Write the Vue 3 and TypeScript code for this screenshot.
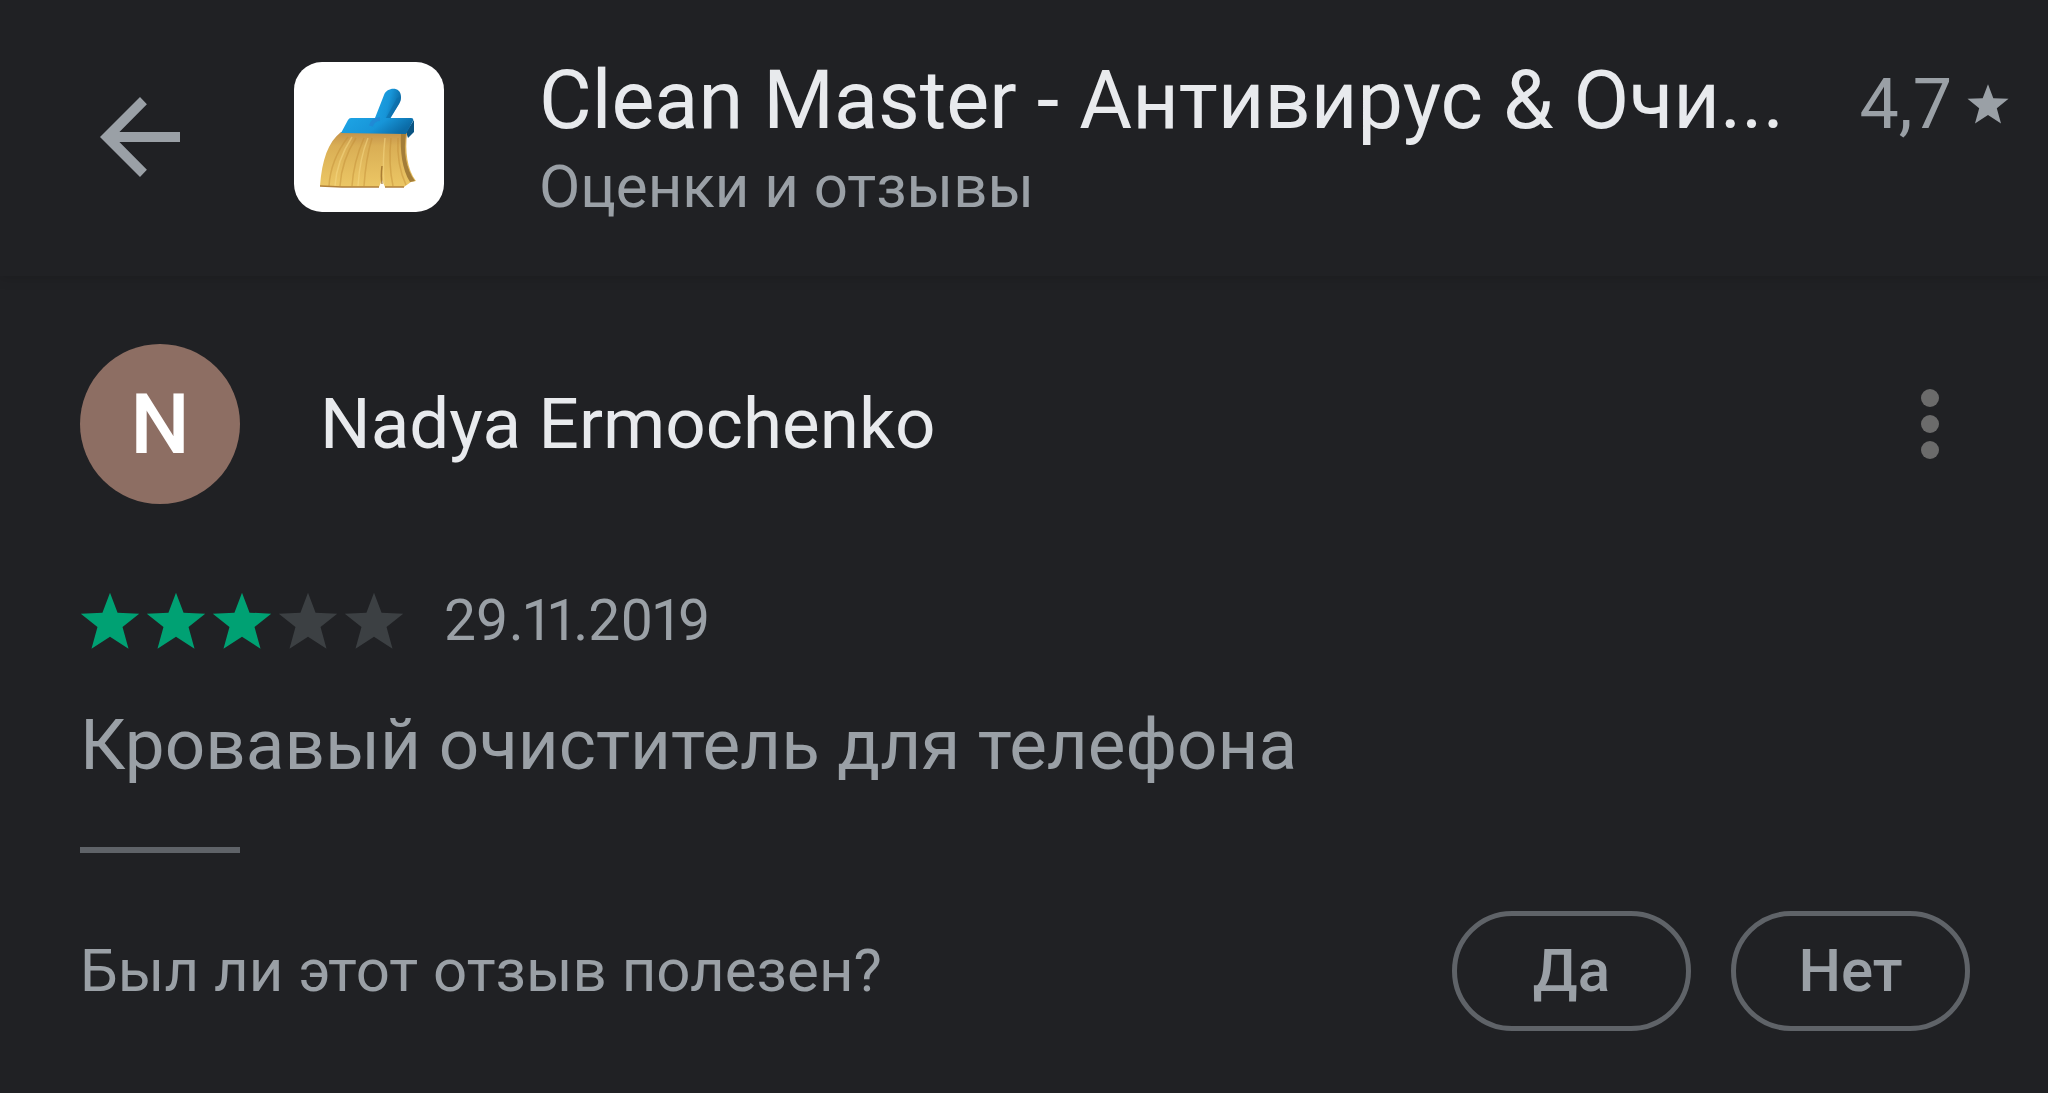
<script setup lang="ts">
import { ref } from 'vue'

interface Review {
  author: string
  rating: number
  date: string
  text: string
}

const review: Review = {
  author: 'Nadya Ermochenko',
  rating: 3,
  date: '29.11.2019',
  text: 'Кровавый очиститель для телефона',
}

const answers = ['Да', 'Нет']
const answer = ref('')
const starPath = 'M12 1.2l2.9 7.6 8.3.4-6.4 5.1 2.3 8.3-7.1-4.6-7.1 4.6 2.3-8.3L.8 9.2l8.3-.4z'
</script>

<template>
  <div class="page">
    <header class="bar">
      <button class="icon-button back" type="button" aria-label="Назад">
        <svg viewBox="0 0 80 80" aria-hidden="true">
          <path d="M80 34.9H19.400L46.900 7.300 40 0 0 40l40 40 6.900-7.200L19.400 45.100H80z" fill="#9aa0a6" />
        </svg>
      </button>
      <svg class="app-icon" viewBox="0 0 150 150" aria-hidden="true">
        <defs>
          <linearGradient id="handle" x1="0" y1="0" x2="1" y2="0.300">
            <stop offset="0" stop-color="#1ea5e6" />
            <stop offset="0.600" stop-color="#1795d8" />
            <stop offset="1" stop-color="#0b6ba6" />
          </linearGradient>
          <linearGradient id="straw" x1="0" y1="0" x2="0" y2="1">
            <stop offset="0" stop-color="#c4924a" />
            <stop offset="0.250" stop-color="#d9ae55" />
            <stop offset="1" stop-color="#ecc765" />
          </linearGradient>
        </defs>
        <rect width="150" height="150" rx="28" fill="#fff" />
        <path d="M112 70l8-12v12l-6 6z" fill="#0a5482" />
        <path d="M47 70C34 80 28 98 26 124l22 1 37 0 3-7 3 7 19 0 7-5 5-1c-9-12-11-30-9-48z" fill="url(#straw)" />
        <path d="M112 71c-3 18 0 36 9 48l-5 1c-8-13-10-31-9-49z" fill="#a37d38" />
        <path d="M54 75C41 92 36 108 35 124M62 76C51 93 47 108 46 124M70 76C63 92 59 108 58 124M78 76C73 93 71 109 70 124M97 76c-2 18-1 34 2 48M104 76c-1 18 2 34 8 47" fill="none" stroke="#c18b36" stroke-width="1.500" opacity=".45" />
        <path d="M58 75C47 92 42 108 41 124M74 76C67 93 65 108 64 124M91 76c-2 18-2 32-1 46" fill="none" stroke="#f8dc88" stroke-width="1.500" opacity=".5" />
        <path d="M88 104c-1 8-1 12 0 18" fill="none" stroke="#9b6d29" stroke-width="1.500" opacity=".8" />
        <path d="M26 124l22 1h37M91 125h19" fill="none" stroke="#b07f3a" stroke-width="1.500" />
        <path d="M81 56l9-23c3-8 17-9 17 2 0 3-1 5-2 7l-9 15z" fill="url(#handle)" />
        <path d="M107 35c0 3-1 5-2 7l-9 14h-4l11-20z" fill="#0b6da8" opacity=".6" />
        <path d="M57 56h60q3 0 2 3l-7 13-65-1 7-13q1-2 3-2z" fill="url(#handle)" />
        <path d="M77 64q2-7 9-7" fill="none" stroke="#287bcf" stroke-width="4" opacity=".5" />
      </svg>
      <div class="heading">
        <div class="title-row">
          <h1 class="title">Clean Master - Антивирус &amp; Очи...</h1>
          <div class="score">
            <span>4,7</span>
            <svg viewBox="0 0 24 24" aria-hidden="true"><path :d="starPath" /></svg>
          </div>
        </div>
        <p class="subtitle">Оценки и отзывы</p>
      </div>
    </header>

    <main class="review">
      <div class="author">
        <div class="avatar" aria-hidden="true">N</div>
        <h2 class="name">{{ review.author }}</h2>
        <button class="icon-button more" type="button" aria-label="Ещё">
          <span></span><span></span><span></span>
        </button>
      </div>

      <div class="meta">
        <div class="stars" role="img" :aria-label="`${review.rating} из 5`">
          <svg v-for="n in 5" :key="n" viewBox="0.5 0.5 23 23" :class="{ on: n <= review.rating }">
            <path :d="starPath" />
          </svg>
        </div>
        <time class="date" datetime="2019-11-29">{{ review.date }}</time>
      </div>

      <p class="text">{{ review.text }}</p>
      <hr class="rule" />

      <div class="feedback">
        <p class="question">Был ли этот отзыв полезен?</p>
        <div class="answers">
          <button
            v-for="a in answers"
            :key="a"
            type="button"
            class="answer"
            :aria-pressed="answer === a"
            @click="answer = a"
          >{{ a }}</button>
        </div>
      </div>
    </main>
  </div>
</template>

<style>
body {
  background: #202124;
}
</style>

<style scoped>
.page {
  min-height: 100vh;
  background: #202124;
  color: #9aa0a6;
  font-family: Roboto, "Noto Sans", sans-serif;
  font-size: 60px;
  line-height: 72px;
}

h1,
h2,
p {
  margin: 0;
  font-weight: 400;
}

.bar {
  display: flex;
  align-items: center;
  box-sizing: border-box;
  height: 276px;
  padding: 0 38px 3px 100px;
  box-shadow: 0 2px 12px rgba(0, 0, 0, 0.15);
}

.icon-button {
  padding: 0;
  border: 0;
  background: none;
  cursor: pointer;
}

.back {
  flex: none;
  width: 80px;
  height: 80px;
}

.back svg {
  display: block;
}

.app-icon {
  flex: none;
  width: 150px;
  height: 150px;
  margin: 0 95px 0 114px;
}

.heading {
  flex: 1;
  min-width: 0;
}

.title-row {
  display: flex;
  align-items: baseline;
  justify-content: space-between;
}

.title {
  overflow: hidden;
  color: #e8eaed;
  font-size: 81px;
  line-height: 100px;
  white-space: nowrap;
}

.score {
  display: flex;
  align-items: center;
  gap: 14px;
  font-size: 70px;
}

.score svg {
  width: 44px;
  height: 44px;
  fill: #9aa0a6;
}

.review {
  padding: 68px 78px 60px 80px;
}

.author {
  display: flex;
  align-items: center;
}

.avatar {
  flex: none;
  width: 160px;
  height: 160px;
  margin-right: 80px;
  border-radius: 50%;
  background: #8d6e63;
  color: #fff;
  font-size: 84px;
  font-weight: 500;
  line-height: 162px;
  text-align: center;
}

.name {
  flex: 1;
  color: #e8eaed;
  font-size: 71px;
  line-height: 76px;
}

.more {
  display: flex;
  flex-direction: column;
  align-items: center;
  gap: 8px;
  width: 80px;
}

.more span {
  width: 18px;
  height: 18px;
  border-radius: 50%;
  background: #6b6b6b;
}

.meta {
  display: flex;
  align-items: center;
  gap: 40px;
  margin-top: 81px;
}

.stars {
  display: flex;
  gap: 6px;
}

.stars svg {
  width: 60px;
  height: 60px;
  fill: #3c4043;
}

.stars svg.on {
  fill: #00a173;
}

.date {
  font-size: 57px;
  font-variant-numeric: proportional-nums;
}

.text {
  margin-top: 52px;
  font-size: 71px;
}

.rule {
  width: 160px;
  height: 6px;
  margin: 66px 0 58px;
  border: 0;
  background: #5f6368;
}

.feedback {
  display: flex;
  align-items: center;
  justify-content: space-between;
}

.answers {
  display: flex;
  gap: 40px;
}

.answer {
  width: 239px;
  height: 120px;
  padding: 0;
  border: 5px solid #5f6368;
  border-radius: 60px;
  background: none;
  color: #9aa0a6;
  font: inherit;
  font-weight: 500;
  cursor: pointer;
}
</style>
